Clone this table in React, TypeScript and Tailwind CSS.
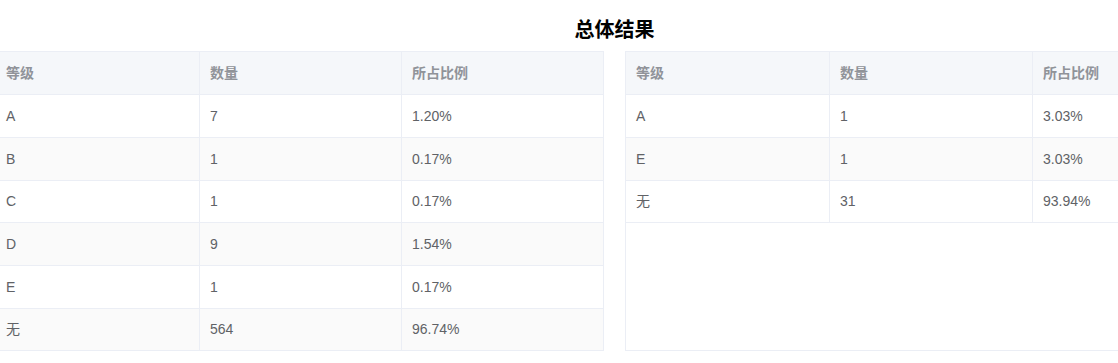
import React from "react";

type Row = [string, string, string];

const leftRows: Row[] = [
  ["A", "7", "1.20%"],
  ["B", "1", "0.17%"],
  ["C", "1", "0.17%"],
  ["D", "9", "1.54%"],
  ["E", "1", "0.17%"],
  ["无", "564", "96.74%"],
];

const rightRows: Row[] = [
  ["A", "1", "3.03%"],
  ["E", "1", "3.03%"],
  ["无", "31", "93.94%"],
];

const heights = ["h-[43px]", "h-[43px]", "h-[42px]", "h-[43px]", "h-[43px]", "h-[42px]"];

function Table({ rows, cols, fill }: { rows: Row[]; cols: [string, string]; fill: boolean }) {
  return (
    <div className="flex flex-col w-[609px] shrink-0 border border-[#ebeef5] bg-white">
      <div className="flex h-[43px] border-b border-[#ebeef5] bg-[#f5f7fa] text-[#909399] font-bold">
        <div className={`${cols[0]} shrink-0 border-r border-[#ebeef5] pl-[10px] flex items-center`}>等级</div>
        <div className={`${cols[1]} shrink-0 border-r border-[#ebeef5] pl-[10px] flex items-center`}>数量</div>
        <div className="flex-1 pl-[10px] flex items-center">所占比例</div>
      </div>
      {rows.map((r, i) => {
        const last = i === rows.length - 1 && fill;
        return (
          <div
            key={i}
            className={`flex ${last ? "h-[41px]" : heights[i]} ${last ? "" : "border-b border-[#ebeef5]"} ${
              i % 2 === 1 ? "bg-[#fafafa]" : "bg-white"
            } text-[#606266]`}
          >
            <div className={`${cols[0]} shrink-0 border-r border-[#ebeef5] pl-[10px] flex items-center`}>{r[0]}</div>
            <div className={`${cols[1]} shrink-0 border-r border-[#ebeef5] pl-[10px] flex items-center`}>{r[1]}</div>
            <div className="flex-1 pl-[10px] flex items-center">{r[2]}</div>
          </div>
        );
      })}
      <div className="flex-1" />
    </div>
  );
}

export default function App() {
  return (
    <div
      className="w-[1118px] h-[363px] overflow-hidden bg-white text-[14px]"
      style={{ fontFamily: '"Liberation Sans", "Noto Sans CJK SC", sans-serif' }}
    >
      <div className="ml-[-5px] w-[1239px] flex flex-col">
        <div className="h-[51px] pt-2 flex items-center justify-center text-[20px] font-bold text-black">
          总体结果
        </div>
        <div className="flex gap-[21px] items-stretch">
          <Table rows={leftRows} cols={["w-[204px]", "w-[202px]"]} fill={true} />
          <Table rows={rightRows} cols={["w-[204px]", "w-[203px]"]} fill={false} />
        </div>
      </div>
    </div>
  );
}
